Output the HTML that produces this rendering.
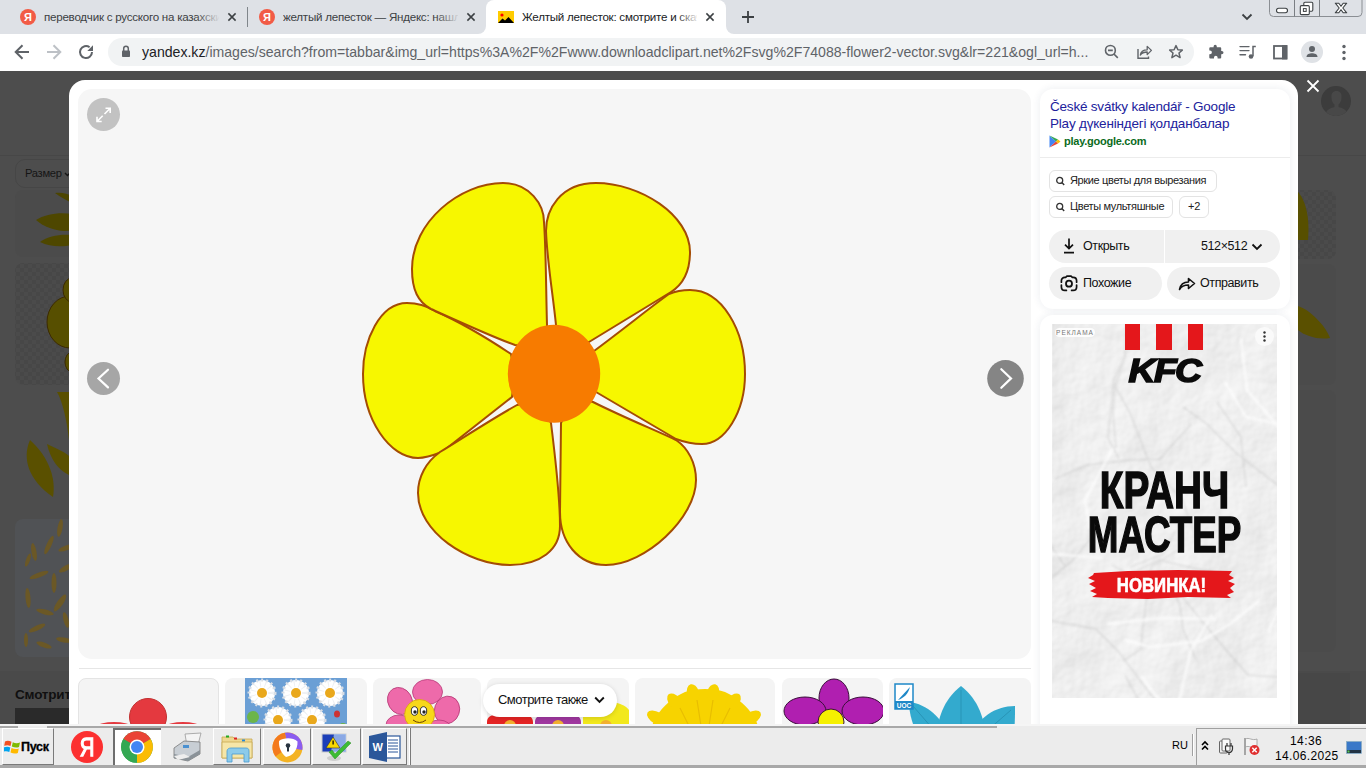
<!DOCTYPE html>
<html><head><meta charset="utf-8">
<style>
*{box-sizing:border-box;margin:0;padding:0}
html,body{width:1366px;height:768px;overflow:hidden;background:#4d4d4d;font-family:"Liberation Sans",sans-serif}
body{position:relative}
.a{position:absolute}
svg{display:block}
/* tab strip */
#tabs{left:0;top:0;width:1366px;height:34px;background:#dee1e6}
.tt{font-size:11.6px;letter-spacing:-0.25px;color:#3c4043;white-space:nowrap;overflow:hidden;top:9px;height:16px;line-height:16px}
.fade{top:8px;width:24px;height:18px}
.fav{width:16px;height:16px;border-radius:50%;background:#f25b46;color:#fff;font-size:11px;font-weight:bold;text-align:center;line-height:16px;top:9px}
#toolbar{left:0;top:34px;width:1366px;height:37px;background:#fff}
#omni{left:108px;top:38px;width:1086px;height:28px;border-radius:14px;background:#f1f3f4}
#url{left:142px;top:44px;font-size:14.1px;line-height:16px;color:#5f6368;white-space:nowrap}
#url b{font-weight:normal;color:#202124}
/* page */
#page{left:0;top:71px;width:1366px;height:654px;background:#4d4d4d;overflow:hidden}
/* modal */
#modal{left:69px;top:80px;width:1229px;height:700px;background:#fff;border-radius:16px;overflow:hidden}
#imgarea{left:9px;top:9px;width:953px;height:570px;background:#f6f6f6;border-radius:14px}
.card{background:#fff;border-radius:13px;box-shadow:0 0 8px rgba(30,50,90,.09)}
.chip{height:22px;border:1px solid #e3e3e3;border-radius:6px;font-size:11px;letter-spacing:-0.35px;color:#222;line-height:18px;white-space:nowrap}
.btn{background:#f0f0f0;height:33px;border-radius:17px;font-size:13px;color:#111;line-height:33px}
.thumb{top:598px;height:120px;background:#f3f3f3;border-radius:8px;overflow:hidden}
/* taskbar */
#taskbar{left:0;top:724px;width:1366px;height:44px;background:#ececec}
.tb{top:728px;height:37px;border:1px solid;border-color:#fff #7a7a7a #7a7a7a #fff}
</style></head><body>
<div id="tabs" class="a"></div>
<!-- tab 1 -->
<div class="a fav" style="left:20px">Я</div>
<div class="a tt" style="left:44px;width:175px">переводчик с русского на казахский</div>
<div class="a fade" style="left:196px;background:linear-gradient(90deg,rgba(222,225,230,0),#dee1e6)"></div>
<svg class="a" style="left:226px;top:11px" width="12" height="12" viewBox="0 0 12 12"><path d="M2.4 2.4L9.6 9.6M9.6 2.4L2.4 9.6" stroke="#3c4043" stroke-width="1.5"/></svg>
<div class="a" style="left:247px;top:7px;width:1px;height:20px;background:#80868b"></div>
<!-- tab 2 -->
<div class="a fav" style="left:259px">Я</div>
<div class="a tt" style="left:283px;width:175px">желтый лепесток — Яндекс: нашлось</div>
<div class="a fade" style="left:436px;background:linear-gradient(90deg,rgba(222,225,230,0),#dee1e6)"></div>
<svg class="a" style="left:465px;top:11px" width="12" height="12" viewBox="0 0 12 12"><path d="M2.4 2.4L9.6 9.6M9.6 2.4L2.4 9.6" stroke="#3c4043" stroke-width="1.5"/></svg>
<!-- active tab -->
<div class="a" style="left:478px;top:26px;width:256px;height:8px;background:#fff"></div>
<div class="a" style="left:478px;top:26px;width:8px;height:8px;background:#dee1e6;border-bottom-right-radius:8px"></div>
<div class="a" style="left:726px;top:26px;width:8px;height:8px;background:#dee1e6;border-bottom-left-radius:8px"></div>
<div class="a" style="left:486px;top:0;width:240px;height:34px;background:#fff;border-radius:8px 8px 0 0"></div>
<svg class="a" style="left:498px;top:11px" width="16" height="12" viewBox="0 0 16 12"><rect width="16" height="12" fill="#ffcc00"/><circle cx="4" cy="4" r="1.6" fill="#f00"/><path d="M0 12L4.5 7.5L7 9.5L10.5 6L16 12Z" fill="#000"/></svg>
<div class="a tt" style="left:522px;width:175px;color:#202124">Желтый лепесток: смотрите и скачайте</div>
<div class="a fade" style="left:676px;background:linear-gradient(90deg,rgba(255,255,255,0),#fff)"></div>
<svg class="a" style="left:704px;top:11px" width="12" height="12" viewBox="0 0 12 12"><path d="M2.4 2.4L9.6 9.6M9.6 2.4L2.4 9.6" stroke="#3c4043" stroke-width="1.5"/></svg>
<!-- new tab -->
<svg class="a" style="left:741px;top:10px" width="14" height="14" viewBox="0 0 14 14"><path d="M7 1V13M1 7H13" stroke="#3c4043" stroke-width="1.8"/></svg>
<!-- tab search chevron -->
<svg class="a" style="left:1241px;top:13px" width="12" height="8" viewBox="0 0 12 8"><path d="M1.5 1.5L6 6L10.5 1.5" fill="none" stroke="#3c4043" stroke-width="1.8"/></svg>
<!-- window controls -->
<svg class="a" style="left:1266px;top:0" width="100" height="20" viewBox="0 0 100 20">
<path d="M3.5 0V12.5A4 4 0 0 0 7.5 16.5H92A4 4 0 0 0 96 12.5V0" fill="#dee1e6" stroke="#8a8e93" stroke-width="1"/>
<path d="M28.5 0V16.5M53.5 0V16.5" stroke="#7a7e83" stroke-width="1"/>
<rect x="10.5" y="8.2" width="11" height="4.5" rx="2.2" fill="#fff" stroke="#3c4043" stroke-width="1.1"/>
<rect x="37.8" y="2.3" width="9" height="9" rx="1.2" fill="#fff" stroke="#3c4043" stroke-width="1.1"/>
<rect x="34.3" y="5.6" width="9" height="9" rx="1.2" fill="#fff" stroke="#3c4043" stroke-width="1.1"/>
<rect x="37.4" y="8.6" width="2.8" height="2.8" fill="none" stroke="#3c4043" stroke-width="1"/>
<path d="M69.3 3.2H72.8L75 6.3L77.2 3.2H80.7L76.8 8L80.7 12.8H77.2L75 9.7L72.8 12.8H69.3L73.2 8Z" fill="#fff" stroke="#3c4043" stroke-width="1.1" stroke-linejoin="round"/>
</svg>

<div id="toolbar" class="a"></div>
<!-- nav -->
<svg class="a" style="left:12px;top:44px" width="18" height="16" viewBox="0 0 18 16"><path d="M17 8H3.5M10.5 1.2L3.7 8L10.5 14.8" fill="none" stroke="#5f6368" stroke-width="2"/></svg>
<svg class="a" style="left:45px;top:44px" width="18" height="16" viewBox="0 0 18 16"><path d="M2 8H15.5M8.5 1.2L15.3 8L8.5 14.8" fill="none" stroke="#bdc1c6" stroke-width="2"/></svg>
<svg class="a" style="left:78px;top:44px" width="16" height="16" viewBox="0 0 16 16"><path d="M14 8A6 6 0 1 1 11.6 3.2" fill="none" stroke="#5f6368" stroke-width="2"/><path d="M15 1.3V7H9.3Z" fill="#5f6368"/></svg>
<div id="omni" class="a"></div>
<svg class="a" style="left:121px;top:45px" width="10" height="13" viewBox="0 0 10 13"><path d="M2.7 6V3.6A2.3 2.3 0 0 1 7.3 3.6V6" fill="none" stroke="#5f6368" stroke-width="1.5"/><rect x="1" y="5.5" width="8" height="6.5" rx="0.8" fill="#5f6368"/></svg>
<div id="url" class="a"><b>yandex.kz</b>/images/search?from=tabbar&amp;img_url=https%3A%2F%2Fwww.downloadclipart.net%2Fsvg%2F74088-flower2-vector.svg&amp;lr=221&amp;ogl_url=h...</div>
<svg class="a" style="left:1103px;top:44px" width="18" height="17" viewBox="0 0 18 17"><circle cx="7.4" cy="6.4" r="4.9" fill="none" stroke="#5f6368" stroke-width="1.6"/><path d="M5 6.4H9.8M10.9 10L14.8 13.9" stroke="#5f6368" stroke-width="1.6"/></svg>
<svg class="a" style="left:1135px;top:44px" width="18" height="17" viewBox="0 0 18 17"><path d="M3 5V14.3H13.5V12.5" fill="none" stroke="#5f6368" stroke-width="1.4"/><path d="M5.3 11C5.8 7.5 8.5 5.8 12.2 5.8V2.4L16.4 6.4L12.2 10.6V8C9 8 6.8 9 5.3 11Z" fill="none" stroke="#5f6368" stroke-width="1.3" stroke-linejoin="round"/></svg>
<svg class="a" style="left:1167px;top:44px" width="18" height="17" viewBox="0 0 18 17"><path d="M9 1.6L10.9 5.7L15.3 6.1L12 9L13.1 13.6L9 11.2L4.9 13.6L6 9L2.7 6.1L7.1 5.7Z" fill="none" stroke="#5f6368" stroke-width="1.5" stroke-linejoin="round"/></svg>
<svg class="a" style="left:1207px;top:43px" width="18" height="18" viewBox="0 0 18 18"><path d="M6.6 3.4A1.6 1.6 0 0 1 9.8 3.4V4.2H13.2A1 1 0 0 1 14.2 5.2V7.9H14.8A1.7 1.7 0 0 1 14.8 11.3H14.2V14.4A1 1 0 0 1 13.2 15.4H10.6V14.6A1.8 1.8 0 0 0 7 14.6V15.4H3.3A1 1 0 0 1 2.3 14.4V11.2H3A1.9 1.9 0 0 0 3 7.4H2.3V5.2A1 1 0 0 1 3.3 4.2H6.6Z" fill="#5f6368"/></svg>
<svg class="a" style="left:1239px;top:44px" width="18" height="16" viewBox="0 0 18 16"><path d="M1 2.6H10M1 6.6H10M1 10.7H6.5" stroke="#5f6368" stroke-width="1.4" stroke-linecap="round"/><path d="M14 12.3V2.6H16.8" fill="none" stroke="#5f6368" stroke-width="1.5"/><circle cx="12" cy="12.5" r="2.3" fill="#5f6368"/></svg>
<svg class="a" style="left:1272px;top:44px" width="16" height="16" viewBox="0 0 16 16"><rect x="2" y="2" width="12.5" height="12.5" fill="none" stroke="#5f6368" stroke-width="1.8"/><rect x="10" y="1.2" width="5.3" height="14.2" fill="#5f6368"/></svg>
<div class="a" style="left:1301px;top:41px;width:22px;height:22px;border-radius:50%;background:#dfe2e6"></div>
<svg class="a" style="left:1304px;top:44px" width="16" height="16" viewBox="0 0 16 16"><circle cx="8" cy="5" r="3" fill="#5f6368"/><path d="M2.5 13C2.5 10 5.5 9.2 8 9.2C10.5 9.2 13.5 10 13.5 13Z" fill="#5f6368"/></svg>
<svg class="a" style="left:1341px;top:44px" width="6" height="17" viewBox="0 0 6 17"><circle cx="3" cy="2.5" r="1.7" fill="#5f6368"/><circle cx="3" cy="8.5" r="1.7" fill="#5f6368"/><circle cx="3" cy="14.5" r="1.7" fill="#5f6368"/></svg>

<!-- background page (dimmed) -->
<div id="page" class="a">
  <div class="a" style="left:0;top:84px;width:1366px;height:1px;background:#474747"></div>
  <div class="a" style="left:1321px;top:15px;width:30px;height:30px;border-radius:50%;background:#3c3c3c;overflow:hidden"><svg class="a" style="left:0;top:0" width="30" height="30" viewBox="0 0 30 30"><path d="M10.5 12C10 7 12 5 15.5 5C19 5 21 7 20.5 12C20.3 15 19 17.5 17.5 18.5V21C21 22 26 23 27 30H4C5 23 10 22 13.5 21V18.5C12 17.5 10.7 15 10.5 12Z" fill="#484848"/></svg></div>
  
  <div class="a" style="left:15px;top:88px;width:80px;height:29px;border:1px solid #464646;border-radius:10px"></div>
  <div class="a" style="left:25px;top:96px;font-size:11.2px;color:#151515;letter-spacing:-0.3px">Размер</div><svg class="a" style="left:64px;top:101px" width="7" height="5" viewBox="0 0 7 5"><path d="M1 1L3.5 3.5L6 1" fill="none" stroke="#151515" stroke-width="1.4"/></svg>
  <svg class="a" style="left:0;top:0" width="1366" height="654" viewBox="0 71 1366 654">
    <defs><pattern id="chk" width="8" height="8" patternUnits="userSpaceOnUse"><rect width="8" height="8" fill="#4b4b4b"/><rect width="4" height="4" fill="#474747"/><rect x="4" y="4" width="4" height="4" fill="#474747"/></pattern></defs>
    <rect x="15" y="190" width="80" height="67" rx="8" fill="#4b4b4b"/>
    <path d="M55 193C62 192 68 194 72 196L70 202C64 199 59 196 55 193Z" fill="#4c4500"/>
    <path d="M36 220C45 214 60 212 72 214V230C60 233 45 228 36 220Z" fill="#4e4700"/>
    <path d="M40 242C48 236 60 234 72 235V245C62 247 50 247 40 242Z" fill="#4e4700"/>
    <rect x="15" y="263" width="80" height="122" rx="8" fill="url(#chk)"/>
    <ellipse cx="70" cy="322" rx="23" ry="26" fill="#574f00" stroke="#3c2a00" stroke-width="1"/>
    <ellipse cx="72" cy="290" rx="9" ry="12" fill="#574f00" stroke="#3c2a00" stroke-width="1"/>
    <ellipse cx="72" cy="362" rx="7" ry="10" fill="#574f00" stroke="#3c2a00" stroke-width="1"/>
    <path d="M57 392C62 400 67 420 69 440V392Z" fill="#5a5000"/>
    <path d="M30 440C22 458 28 480 53 497C56 480 50 458 30 440Z" fill="#5a5000"/>
    <path d="M47 444C55 448 65 452 69 456V475C58 470 50 458 47 444Z" fill="#5a5000"/>
    <rect x="15" y="519" width="80" height="138" rx="8" fill="#505255"/>
    <g fill="#6b5826">
      <ellipse cx="34" cy="552" rx="2.5" ry="9" transform="rotate(-10 34 552)"/><ellipse cx="49" cy="545" rx="2.5" ry="10" transform="rotate(25 49 545)"/>
      <ellipse cx="60" cy="528" rx="2.5" ry="9" transform="rotate(10 60 528)"/><ellipse cx="66" cy="548" rx="8" ry="2.5" transform="rotate(-20 66 548)"/>
      <ellipse cx="39" cy="575" rx="10" ry="2.5" transform="rotate(-20 39 575)"/><ellipse cx="54" cy="583" rx="2.5" ry="10"/>
      <ellipse cx="28" cy="598" rx="2.5" ry="10" transform="rotate(-5 28 598)"/><ellipse cx="45" cy="612" rx="9" ry="2.5" transform="rotate(15 45 612)"/>
      <ellipse cx="60" cy="603" rx="3" ry="10" transform="rotate(35 60 603)"/><ellipse cx="37" cy="628" rx="9" ry="2.5" transform="rotate(-25 37 628)"/>
      <ellipse cx="64" cy="640" rx="8" ry="2.5" transform="rotate(10 64 640)"/><ellipse cx="66" cy="568" rx="8" ry="2.5" transform="rotate(-30 66 568)"/>
      <ellipse cx="28" cy="560" rx="2" ry="7" transform="rotate(20 28 560)"/><ellipse cx="66" cy="620" rx="2.5" ry="8" transform="rotate(-15 66 620)"/>
      <ellipse cx="44" cy="645" rx="8" ry="2.5" transform="rotate(20 44 645)"/><ellipse cx="26" cy="640" rx="2" ry="7"/>
    </g>
    <rect x="0" y="671" width="1366" height="54" fill="#4a4a4a"/>
    <rect x="1290" y="190" width="46" height="69" rx="8" fill="url(#chk)"/>
    <path d="M1298 192C1305 200 1310 215 1308 240H1298Z" fill="#574f00"/>
    <rect x="1290" y="264" width="46" height="121" rx="8" fill="#4b4b4b"/><rect x="1290" y="390" width="46" height="262" rx="8" fill="#4b4b4b"/><rect x="1290" y="673" width="60" height="60" fill="#474747"/><path d="M1298 306C1310 310 1325 325 1330 338C1318 340 1305 336 1298 330Z" fill="#5a5000"/>
  </svg>
  <div class="a" style="left:15px;top:616px;font-size:13.5px;font-weight:bold;color:#101010;letter-spacing:-0.2px">Смотрите</div>
  <div class="a" style="left:15px;top:637px;width:80px;height:20px;background:#2a2a2a"></div>
</div>

<!-- modal -->
<div id="modal" class="a">
  <div id="imgarea" class="a"></div>
  <div class="a card" style="left:971px;top:9px;width:250px;height:220px"></div>
  <div class="a card" style="left:971px;top:235px;width:250px;height:500px"></div>
  <div class="a" style="left:981px;top:18px;width:230px;font-size:13.5px;letter-spacing:-0.2px;line-height:17px;color:#21219c">České svátky kalendář - Google<br>Play дүкеніндегі қолданбалар</div>
  <svg class="a" style="left:980px;top:55px" width="12" height="13" viewBox="0 0 12 13"><path d="M0.5 0.5L7 6.5L0.5 12.5Z" fill="#4285f4"/><path d="M0.5 0.5L7 6.5L9 4.5Z" fill="#34a853"/><path d="M0.5 12.5L7 6.5L9 8.5Z" fill="#ea4335"/><path d="M9 4.5L11.5 6.5L9 8.5L7 6.5Z" fill="#fbbc04"/></svg>
  <div class="a" style="left:995px;top:55px;font-size:11px;letter-spacing:-0.25px;font-weight:bold;color:#0b6b1d">play.google.com</div>
  <div class="a" style="left:971px;top:77px;width:250px;height:1px;background:#ececec"></div>
  <div class="a chip" style="left:980px;top:90px;width:168px;padding-left:20px">Яркие цветы для вырезания</div>
  <div class="a chip" style="left:980px;top:116px;width:124px;padding-left:20px">Цветы мультяшные</div>
  <div class="a chip" style="left:1110px;top:116px;width:30px;text-align:center">+2</div>
  <svg class="a" style="left:987px;top:96px" width="11" height="11" viewBox="0 0 11 11"><circle cx="3.7" cy="4.4" r="3" fill="none" stroke="#333" stroke-width="1.3"/><path d="M5.9 6.6L8.2 8.9" stroke="#333" stroke-width="1.4"/></svg>
  <svg class="a" style="left:987px;top:122px" width="11" height="11" viewBox="0 0 11 11"><circle cx="3.7" cy="4.4" r="3" fill="none" stroke="#333" stroke-width="1.3"/><path d="M5.9 6.6L8.2 8.9" stroke="#333" stroke-width="1.4"/></svg>
  <div class="a btn" style="left:980px;top:150px;width:231px"></div>
  <div class="a" style="left:1095px;top:150px;width:1px;height:33px;background:#fff"></div>
  <svg class="a" style="left:993px;top:157px" width="14" height="18" viewBox="0 0 14 18"><path d="M7 1.5V11.5M3 7.6L7 11.6L11 7.6M2 15.6H12" fill="none" stroke="#111" stroke-width="1.7"/></svg>
  <div class="a" style="left:1014px;top:159px;font-size:12.5px;letter-spacing:-0.4px;color:#111">Открыть</div>
  <div class="a" style="left:1132px;top:159px;font-size:12.5px;letter-spacing:-0.4px;color:#111">512×512</div>
  <svg class="a" style="left:1182px;top:163px" width="12" height="8" viewBox="0 0 12 8"><path d="M1.5 1.5L6 6L10.5 1.5" fill="none" stroke="#111" stroke-width="1.8"/></svg>
  <div class="a btn" style="left:980px;top:187px;width:113px"></div>
  <div class="a btn" style="left:1098px;top:187px;width:113px"></div>
  <svg class="a" style="left:991px;top:195px" width="18" height="17" viewBox="0 0 18 17"><path d="M1.4 7.2V5.8C1.4 3.8 2.8 2.4 4.8 2.4H5.6L7 1.2H11L12.4 2.4H13.2C15.2 2.4 16.6 3.8 16.6 5.8V7.2M1.4 10V12C1.4 14 2.8 15.4 4.8 15.4H6.4M11.6 15.4H13.2C15.2 15.4 16.6 14 16.6 12V10" fill="none" stroke="#111" stroke-width="1.7" stroke-linecap="round"/><circle cx="9" cy="8.7" r="3" fill="none" stroke="#111" stroke-width="1.8"/></svg>
  <div class="a" style="left:1014px;top:196px;font-size:12.5px;letter-spacing:-0.4px;color:#111">Похожие</div>
  <svg class="a" style="left:1109px;top:195px" width="18" height="16" viewBox="0 0 18 16"><path d="M1.5 14.5C2.5 9 6 7 10.5 7V3.5L16.5 8.5L10.5 13.5V10C6.5 10 3.5 11 1.5 14.5Z" fill="none" stroke="#111" stroke-width="1.6" stroke-linejoin="round"/></svg>
  <div class="a" style="left:1131px;top:196px;font-size:12.5px;letter-spacing:-0.4px;color:#111">Отправить</div>
  <div class="a" id="ad" style="left:983px;top:244px;width:225px;height:374px;background:#ebebeb;overflow:hidden">
    <svg class="a" style="left:0;top:0" width="225" height="374"><defs><filter id="blr"><feGaussianBlur stdDeviation="1.2"/></filter><filter id="crump" x="0" y="0" width="100%" height="100%"><feTurbulence type="fractalNoise" baseFrequency="0.012" numOctaves="5" seed="9" result="n"/><feDiffuseLighting in="n" surfaceScale="7" lighting-color="#ffffff" diffuseConstant="1"><feDistantLight azimuth="225" elevation="45"/></feDiffuseLighting><feColorMatrix type="matrix" values="0.34 0 0 0 0.62  0.34 0 0 0 0.62  0.34 0 0 0 0.62  0 0 0 1 0"/></filter></defs>
    <rect width="225" height="374" fill="#eee" filter="url(#crump)"/><path d="M48 204 L20 237 L-24 273 L-55 301 L-69 347 M123 207 L111 230 L78 243 M-6 296 L44 305 L66 327 L100 372 L139 406 M95 277 L85 255 L60 241 M227 162 L184 129 L155 100 L131 83 M73 351 L95 392 L144 416 L159 470 M129 271 L145 291 L174 326 L196 351 L252 355 M-5 158 L-15 202 L13 242 M71 337 L89 325 L91 301 L99 243 L126 226 M55 262 L107 236 L141 244 L181 252 M148 225 L130 175 L99 143 L78 89 L63 62 M64 124 L61 89 L63 63 L73 32 L75 -25 M139 100 L108 135 L78 136 L35 141 L3 155 M67 135 L56 114 L62 55 L73 32 M113 248 L128 281 L131 305 L144 336 M194 163 L189 113 L165 78" fill="none" stroke="#a8a8a8" stroke-width="2" opacity=".22" filter="url(#blr)"/><path d="M56 300 L109 294 L164 295 M73 316 L98 323 L149 317 L178 300 L207 277 M90 353 L122 396 L138 433 M127 378 L139 326 L160 291 M61 124 L33 176 L38 205 M-1 306 L-41 267 L-53 250 M173 58 L194 93 L250 105 L272 94 L311 109 M189 14 L195 66 L229 106 M216 308 L234 269 L247 220 M51 234 L-0 230 L-15 246" fill="none" stroke="#ffffff" stroke-width="3" opacity=".6" filter="url(#blr)"/></svg>
    <div class="a" style="left:73px;top:0;width:15px;height:26px;background:#e4171b"></div>
    <div class="a" style="left:104px;top:0;width:16px;height:26px;background:#e4171b"></div>
    <div class="a" style="left:136px;top:0;width:15px;height:26px;background:#e4171b"></div>
    <div class="a" style="left:70px;top:29px;width:85px;font-style:italic;font-weight:bold;font-size:34px;line-height:34px;color:#0a0a0a;-webkit-text-stroke:1.6px #0a0a0a;text-align:center;letter-spacing:-1.5px;transform:scaleX(1.1)">KFC</div>
    <div class="a" style="left:3px;top:4px;width:40px;height:9px;border-radius:5px;background:rgba(255,255,255,.85);font-size:6.5px;line-height:9px;color:#777;letter-spacing:1px;text-align:center">РЕКЛАМА</div>
    <div class="a" style="left:203px;top:3px;width:19px;height:19px;border-radius:50%;background:#fafafa"></div>
    <svg class="a" style="left:211px;top:7px" width="3" height="11" viewBox="0 0 3 11"><circle cx="1.5" cy="1.5" r="1.2" fill="#333"/><circle cx="1.5" cy="5.5" r="1.2" fill="#333"/><circle cx="1.5" cy="9.5" r="1.2" fill="#333"/></svg>
    <div class="a" style="left:0;top:137px;width:225px;text-align:center;font-size:51px;font-weight:bold;line-height:60px;color:#0a0a0a;-webkit-text-stroke:1.5px #0a0a0a;transform:scaleX(.76);transform-origin:center">КРАНЧ</div>
    <div class="a" style="left:0;top:181px;width:225px;text-align:center;font-size:50px;font-weight:bold;line-height:60px;color:#0a0a0a;-webkit-text-stroke:1.5px #0a0a0a;transform:scaleX(.735);transform-origin:center">МАСТЕР</div>
    <svg class="a" style="left:36px;top:245px" width="148" height="31" viewBox="0 0 148 31"><path d="M6 4L40 2L90 1L144 2L141 6L146 9L140 12L147 15L142 19L146 23L139 26L143 29L100 28L60 30L20 29L4 28L9 25L2 22L8 19L1 15L7 12L0 9L5 6Z" fill="#e4171b"/></svg>
    <div class="a" style="left:-3px;top:251px;width:225px;text-align:center;font-size:19.5px;font-weight:bold;line-height:20px;color:#fff;-webkit-text-stroke:0.6px #fff;transform:scaleX(.86);transform-origin:center">НОВИНКА!</div>
  </div>
  <div class="a" style="left:10px;top:588px;width:952px;height:1px;background:#e6e6e6"></div>
  <div class="a thumb" style="left:9px;width:141px;border:1px solid #e4e4e4;background:#f4f4f4">
    <svg class="a" style="left:0;top:0" width="141" height="60"><circle cx="69" cy="38" r="18.5" fill="#e4393f" stroke="#c23030" stroke-width="1"/><ellipse cx="35" cy="47" rx="16" ry="4" fill="#e4393f"/><ellipse cx="104" cy="47" rx="16" ry="4" fill="#e4393f"/></svg>
  </div>
  <div class="a thumb" style="left:156px;width:142px;background:#f4f4f4">
    <svg class="a" style="left:20px;top:0" width="102" height="60" viewBox="0 0 102 60"><rect width="102" height="60" fill="#6b9fd5"/>
    <circle cx="8" cy="39" r="6" fill="#6cb54a"/><circle cx="98" cy="50" r="5" fill="#6cb54a"/>
    <g transform="translate(17 15)"><circle r="13" fill="#fff"/><circle r="13" fill="none" stroke="#d8dde4" stroke-width="3" stroke-dasharray="2 3"/><circle r="9" fill="none" stroke="#eef0f3" stroke-width="6" stroke-dasharray="1 4"/><circle r="5" fill="#e9a81c"/></g><g transform="translate(51 15)"><circle r="13" fill="#fff"/><circle r="13" fill="none" stroke="#d8dde4" stroke-width="3" stroke-dasharray="2 3"/><circle r="9" fill="none" stroke="#eef0f3" stroke-width="6" stroke-dasharray="1 4"/><circle r="5" fill="#e9a81c"/></g><g transform="translate(85 15)"><circle r="13" fill="#fff"/><circle r="13" fill="none" stroke="#d8dde4" stroke-width="3" stroke-dasharray="2 3"/><circle r="9" fill="none" stroke="#eef0f3" stroke-width="6" stroke-dasharray="1 4"/><circle r="5" fill="#e9a81c"/></g><g transform="translate(33 42)"><circle r="13" fill="#fff"/><circle r="13" fill="none" stroke="#d8dde4" stroke-width="3" stroke-dasharray="2 3"/><circle r="9" fill="none" stroke="#eef0f3" stroke-width="6" stroke-dasharray="1 4"/><circle r="5" fill="#e9a81c"/></g><g transform="translate(67 42)"><circle r="13" fill="#fff"/><circle r="13" fill="none" stroke="#d8dde4" stroke-width="3" stroke-dasharray="2 3"/><circle r="9" fill="none" stroke="#eef0f3" stroke-width="6" stroke-dasharray="1 4"/><circle r="5" fill="#e9a81c"/></g>
    <ellipse cx="92" cy="36" rx="3" ry="3.5" fill="#c33"/></svg>
  </div>
  <div class="a thumb" style="left:304px;width:108px;background:#f4f4f4">
    <svg class="a" style="left:0;top:0" width="108" height="60" viewBox="0 0 108 60"><g fill="#ee6aaa" stroke="#b83a78" stroke-width=".8"><ellipse cx="27" cy="23" rx="12" ry="14" transform="rotate(-30 27 23)"/><ellipse cx="54.5" cy="14" rx="15" ry="12.5"/><ellipse cx="74" cy="32" rx="12.5" ry="14" transform="rotate(20 74 32)"/><ellipse cx="26" cy="47" rx="13" ry="10"/><ellipse cx="66" cy="52" rx="13" ry="10"/></g><circle cx="46.6" cy="36.5" r="15" fill="#f7d81a" stroke="#d8a010" stroke-width=".8"/><ellipse cx="41.5" cy="33" rx="3.2" ry="4.3" fill="#fff" stroke="#333" stroke-width="1"/><ellipse cx="50.5" cy="33" rx="3.2" ry="4.3" fill="#fff" stroke="#333" stroke-width="1"/><circle cx="42" cy="34" r="1.7" fill="#222"/><circle cx="51" cy="34" r="1.7" fill="#222"/><path d="M40 42Q46.5 47 53 42" fill="none" stroke="#6a4000" stroke-width="1"/></svg>
  </div>
  <div class="a thumb" style="left:418px;width:142px;background:#f4f4f4">
    <svg class="a" style="left:0;top:0" width="142" height="60" viewBox="0 0 142 60"><path d="M0 60V44C0 38 6 36 12 37C18 34 28 34 34 37C40 36 46 38 46 44V60Z" fill="#e52424"/><path d="M48 60V44C48 38 54 36 60 37C66 34 76 34 82 37C88 36 94 38 94 44V60Z" fill="#a038a0"/><path d="M96 36C100 26 108 24 116 26C126 22 138 26 142 32V60H96Z" fill="#f2e81c"/><circle cx="23" cy="48" r="6" fill="#f2b030"/><circle cx="71" cy="48" r="6" fill="#f2b030"/><circle cx="119" cy="48" r="6" fill="#f2b030"/></svg>
  </div>
  <div class="a" style="left:414px;top:604px;width:134px;height:33px;border-radius:17px;background:#fff;box-shadow:0 1px 5px rgba(0,0,0,.15)"></div>
  <div class="a" style="left:429px;top:612px;font-size:13px;letter-spacing:-0.52px;color:#111">Смотрите также</div>
  <svg class="a" style="left:525px;top:616px" width="11" height="8" viewBox="0 0 11 8"><path d="M1.2 1.5L5.5 5.8L9.8 1.5" fill="none" stroke="#111" stroke-width="1.9"/></svg>
  <div class="a thumb" style="left:566px;width:140px;background:#f4f4f4">
    <svg class="a" style="left:0;top:0" width="140" height="60" viewBox="0 0 140 60"><g fill="#f7d300"><path d="M14 60C16 42 28 24 50 14C60 10 80 10 90 14C112 24 124 42 126 60Z"/><ellipse cx="40" cy="24" rx="6" ry="10" transform="rotate(-40 40 24)"/><ellipse cx="58" cy="15" rx="6" ry="9" transform="rotate(-15 58 15)"/><ellipse cx="78" cy="15" rx="6" ry="9" transform="rotate(15 78 15)"/><ellipse cx="98" cy="24" rx="6" ry="10" transform="rotate(40 98 24)"/><ellipse cx="22" cy="40" rx="6" ry="11" transform="rotate(-60 22 40)"/><ellipse cx="116" cy="40" rx="6" ry="11" transform="rotate(60 116 40)"/></g><g fill="none" stroke="#e8be00" stroke-width="1.2"><path d="M45 30L55 50M62 22L66 48M78 22L74 48M95 30L85 50"/></g></svg>
  </div>
  <div class="a thumb" style="left:713px;width:101px;background:#f4f4f4">
    <svg class="a" style="left:0;top:0" width="101" height="60" viewBox="0 0 101 60"><g fill="#b01fb0" stroke="#3a103a" stroke-width="1"><ellipse cx="52" cy="20" rx="15" ry="19"/><ellipse cx="23" cy="33" rx="21" ry="14"/><ellipse cx="81" cy="33" rx="21" ry="14"/></g><circle cx="49" cy="44" r="13" fill="#f5f000" stroke="#3a103a" stroke-width="1"/></svg>
  </div>
  <div class="a thumb" style="left:820px;width:142px;background:#f4f4f4">
    <svg class="a" style="left:0;top:0" width="142" height="60" viewBox="0 0 142 60"><g fill="#33aace"><path d="M20 24C38 26 54 40 60 60H30C24 48 20 36 20 24Z"/><path d="M126 28C106 28 88 40 82 60H124C126 50 126 40 126 28Z"/><path d="M72 8C54 22 48 42 48 60H96C96 42 90 22 72 8Z"/></g><g fill="none" stroke="#2894b6" stroke-width="1"><path d="M72 12V58M24 28L50 58M122 32L92 58"/></g><rect x="6" y="6" width="18" height="25" fill="#fff" stroke="#1e88c8" stroke-width="1.5"/><path d="M9 22L21 9C19 16 15 20 9 22Z" fill="#1e88c8"/><rect x="6" y="23" width="18" height="8" fill="#1e88c8"/><text x="15" y="30" font-size="6.5" font-weight="bold" fill="#fff" text-anchor="middle" font-family="Liberation Sans">UOC</text></svg>
  </div>
</div>


<svg class="a" style="left:0;top:0" width="1366" height="768" viewBox="0 0 1366 768">
<g fill="#f7f700" stroke="#a44c04" stroke-width="2" stroke-linejoin="round">
<path d="M515,375 L511,354 C490,340 460,322 435,311 C427,306 416,303 407,303 C380,303 363,340 363,374 C363,420 390,458 418,458 C426,458 434,455 442,452 L512,397 Z"/>
<path d="M549,350 L547,325 C546,290 546,250 544,222 C544,205 530,183 503,183 C460,183 412,222 412,269 C412,290 418,302 431,309 C460,322 495,338 515,345 Z"/>
<path d="M557,350 L556,325 C553,295 547,260 546,231 C546,210 560,183 596,183 C640,183 690,215 690,252 C690,272 682,285 671,292 L589,342 Z"/>
<path d="M590,372 L594,351 C625,328 652,306 669,294 C676,291 683,290 690,290 C722,290 745,330 745,374 C745,412 725,444 702,444 C693,444 684,442 676,439 L596,392 Z"/>
<path d="M572,396 L593,402 C625,418 655,430 676,440 C688,448 696,463 696,480 C696,518 645,565 606,565 C578,565 560,542 560,512 L561,423 Z"/>
<path d="M540,400 L517,405 C490,420 460,440 440,452 C426,462 418,477 418,493 C418,532 468,565 510,565 C540,565 560,550 560,526 C560,495 555,455 551,423 Z"/>
</g>
<ellipse cx="554" cy="373.8" rx="46.2" ry="49" fill="#f77b00"/>
<circle cx="103.5" cy="114.5" r="16.5" fill="#c2c2c2"/>
<path d="M105.5 108.3H110.2V113M110.2 108.3L104.5 114M97 116.8V121.5H101.7M97 121.5L102.7 115.8" fill="none" stroke="#fff" stroke-width="1.6"/>
<circle cx="103.5" cy="378.4" r="16.5" fill="#a6a6a6"/>
<path d="M108 369.7L98.5 378.5L108 387.4" fill="none" stroke="#fff" stroke-width="2.2" stroke-linecap="round"/>
<circle cx="1005.5" cy="378.4" r="18.3" fill="#858585"/>
<path d="M1001.3 369.2L1011 378.4L1001.3 387.8" fill="none" stroke="#fff" stroke-width="2.2" stroke-linecap="round"/>
</svg>

<!-- close modal -->
<svg class="a" style="left:1306px;top:79px" width="14" height="14" viewBox="0 0 14 14"><path d="M1.5 1.5L12.5 12.5M12.5 1.5L1.5 12.5" stroke="#fff" stroke-width="1.8"/></svg>

<!-- taskbar -->
<div id="taskbar" class="a"></div>
<div class="a" style="left:0;top:724px;width:1366px;height:2px;background:#f5f5f5"></div>
<div class="a" style="left:0;top:726px;width:18px;height:2px;background:#a8a8a8"></div>
<div class="a" style="left:47px;top:726px;width:950px;height:2px;background:#a8a8a8"></div>
<div class="a" style="left:0;top:765px;width:1366px;height:3px;background:#a8a8a8"></div>
<div class="a tb" style="left:2px;width:52px"></div>
<svg class="a" style="left:4px;top:738px" width="17" height="17" viewBox="0 0 17 17"><path d="M1 3.5C3 2.5 5 2.5 7.5 3.8L6.5 8C4.5 7 2.5 7 0.2 7.8Z" fill="#f25022"/><path d="M8.8 4.2C11 5.3 13.5 5.5 16 4.5L15 9C12.5 10 10.3 9.5 7.8 8.5Z" fill="#7fba00"/><path d="M0 9.2C2.5 8.5 4.5 8.5 6.3 9.5L5.3 14C3.3 13 1.2 13 -0.5 13.8Z" fill="#00a4ef"/><path d="M7.5 10C10 11 12.3 11.5 14.8 10.4L13.8 15C11.3 16 9 15.5 6.5 14.5Z" fill="#ffb900"/></svg>
<div class="a" style="left:21px;top:740px;font-size:12.5px;font-weight:bold;color:#000;letter-spacing:-0.3px;-webkit-text-stroke:0.3px #000">Пуск</div>
<!-- yandex -->
<div class="a" style="left:71px;top:731px;width:32px;height:32px;border-radius:50%;background:#fc3030"></div>
<div class="a" style="left:71px;top:733px;width:32px;text-align:center;font-size:26px;line-height:28px;color:#fff;-webkit-text-stroke:1.3px #fff;transform:scaleX(.78)">Я</div>
<!-- chrome pressed -->
<div class="a" style="left:113px;top:728px;width:48px;height:37px;background:#fff;border-left:2px solid #6e6e6e;border-top:2px solid #6e6e6e"></div>
<svg class="a" style="left:121px;top:731px" width="32" height="32" viewBox="0 0 32 32"><circle cx="16" cy="16" r="15.8" fill="#34a853"/><path d="M16 16L2.3 8.1A15.8 15.8 0 0 1 29.7 8.1Z" fill="#ea4335"/><path d="M16 16L29.7 8.1A15.8 15.8 0 0 1 16 31.8Z" fill="#fbbc04"/><path d="M16 16L2.3 8.1A15.8 15.8 0 0 0 16 31.8Z" fill="#34a853"/><circle cx="16" cy="16" r="7.5" fill="#fff"/><circle cx="16" cy="16" r="6" fill="#4285f4"/></svg>
<!-- fax -->
<svg class="a" style="left:170px;top:732px" width="34" height="30" viewBox="0 0 34 30"><path d="M15 2L31 1L28 13L17 14Z" fill="#f4f4f4" stroke="#999" stroke-width=".8"/><path d="M4 16L14 9L30 10L30 22L18 29L4 26Z" fill="#c8ced4" stroke="#777" stroke-width=".8"/><path d="M4 22L18 25L30 18V22L18 29L4 26Z" fill="#8a9298"/><rect x="13" y="13" width="6" height="3" fill="#4a90d0"/><path d="M4 24L14 22L20 25L8 28Z" fill="#eee"/></svg>
<!-- folder -->
<div class="a tb" style="left:213px;width:48px"></div>
<svg class="a" style="left:221px;top:734px" width="33" height="30" viewBox="0 0 33 30"><path d="M1 3H12L14 5H31V24H1Z" fill="#eed890" stroke="#c8a850" stroke-width=".8"/><rect x="5" y="1.5" width="3" height="2" fill="#2a2"/><rect x="13" y="3.5" width="3" height="2" fill="#d22"/><rect x="21" y="5.5" width="3" height="2" fill="#28d"/><path d="M1 8H31V24H1Z" fill="#f6e6a8" stroke="#c8a850" stroke-width=".8"/><path d="M6 28V17C6 15 8 14 10 14H25C27 14 28 15 28 17V28H23V20H11V28Z" fill="#8ccbea" stroke="#4a9ad0" stroke-width=".8"/></svg>
<!-- avast -->
<div class="a tb" style="left:263px;width:48px"></div>
<svg class="a" style="left:272px;top:732px" width="31" height="31" viewBox="0 0 31 31"><circle cx="15.5" cy="15.5" r="15" fill="#f4b324"/><path d="M15.5 15.5L12.9 0.7A15 15 0 0 1 30.3 18.1Z" fill="#8b5cf0"/><path d="M15.5 15.5L3.5 24.5A15 15 0 0 1 12.9 0.7Z" fill="#f47a1c"/><path d="M7 9C11 5.5 21 5 25.5 9.5C26 17 21 24 14 25C9 21 6.5 15 7 9Z" fill="#fff"/><circle cx="16" cy="13.5" r="2.3" fill="#2a3440"/><path d="M15 14H17V19.5H15Z" fill="#2a3440"/></svg>
<!-- security -->
<div class="a tb" style="left:312px;width:49px"></div>
<svg class="a" style="left:321px;top:733px" width="32" height="30" viewBox="0 0 32 30"><rect x="1" y="1" width="24" height="18" fill="#1c3fb8" stroke="#ccc" stroke-width="1"/><path d="M13 1H25V19H10Z" fill="#a8c4f0" opacity=".8"/><path d="M12 4L19 15H5Z" fill="#f8d800" stroke="#333" stroke-width=".6"/><rect x="11.5" y="7.5" width="1.2" height="4" fill="#000"/><path d="M6 25C6 22 20 22 20 25C20 29 6 29 6 25Z" fill="#d0d0d0"/><path d="M8 19L14 26L30 10L27 8L14 21L11 17Z" fill="#3cbc34" stroke="#2a8a20" stroke-width=".5"/></svg>
<!-- word -->
<div class="a tb" style="left:362px;width:45px"></div>
<div class="a" style="left:409px;top:728px;width:2px;height:37px;border-left:1px solid #fff;border-right:1px solid #7a7a7a"></div>
<svg class="a" style="left:369px;top:732px" width="32" height="30" viewBox="0 0 32 30"><rect x="17" y="4" width="14" height="22" fill="#fff" stroke="#2b579a" stroke-width="1.2"/><path d="M19 8H29M19 11H29M19 14H29M19 17H29M19 20H29" stroke="#2b579a" stroke-width="1"/><path d="M0 4L18 0V30L0 26Z" fill="#2b579a"/><text x="8.8" y="19" font-size="11" font-weight="bold" fill="#fff" text-anchor="middle" font-family="Liberation Sans">W</text></svg>
<!-- tray -->
<div class="a" style="left:1172px;top:739px;font-size:11px;color:#000">RU</div>
<div class="a" style="left:1192px;top:734px;width:2px;height:22px;border-left:1px solid #a0a0a0;border-right:1px solid #fff"></div>
<div class="a" style="left:1196px;top:728px;width:170px;height:37px;border-left:1px solid #a0a0a0;border-top:1px solid #a0a0a0"></div>
<svg class="a" style="left:1201px;top:740px" width="8" height="11" viewBox="0 0 8 11"><path d="M1 5L4 2L7 5M1 9.5L4 6.5L7 9.5" fill="none" stroke="#000" stroke-width="1.6"/></svg>
<svg class="a" style="left:1218px;top:737px" width="17" height="19" viewBox="0 0 17 19"><rect x="1.5" y="4" width="8" height="12" rx="1" fill="#f0f0f0" stroke="#666"/><rect x="4" y="2" width="8" height="12" rx="1" fill="#fafafa" stroke="#666"/><path d="M9 6V9M13 6V9M7.5 9H14.5V12A3.5 3.5 0 0 1 7.5 12Z M11 15V18" fill="none" stroke="#333" stroke-width="1.2"/></svg>
<svg class="a" style="left:1243px;top:737px" width="17" height="19" viewBox="0 0 17 19"><path d="M2 1V18" stroke="#888" stroke-width="1.4"/><path d="M2.5 2C6 0 9 4 14 2V10C9 12 6 8 2.5 10Z" fill="#f4f4f4" stroke="#999" stroke-width=".8"/><circle cx="11.5" cy="13" r="5" fill="#e03030"/><path d="M9.3 10.8L13.7 15.2M13.7 10.8L9.3 15.2" stroke="#fff" stroke-width="1.4"/></svg>
<div class="a" style="left:1290px;top:734px;font-size:12px;letter-spacing:0.4px;color:#000">14:36</div>
<div class="a" style="left:1275px;top:749px;font-size:12px;letter-spacing:0.35px;color:#000">14.06.2025</div>
<svg class="a" style="left:1346px;top:741px" width="16" height="13" viewBox="0 0 16 13"><rect x=".5" y=".5" width="15" height="12" fill="#3a78c8" stroke="#8ab" stroke-width=".6"/><rect x="1" y="9" width="14" height="3" fill="#234"/><rect x="1.5" y="9.5" width="2" height="2" fill="#5c5"/></svg>
</body></html>
